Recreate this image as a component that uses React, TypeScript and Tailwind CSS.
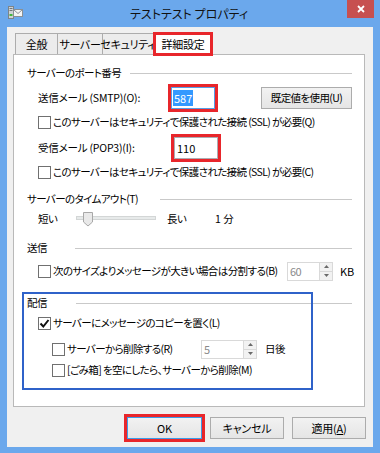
import React from "react";

const Check = ({ checked = false }: { checked?: boolean }) => (
  <span className="w-[13px] h-[13px] border border-[#707070] bg-white flex items-center justify-center shrink-0">
    {checked && (
      <svg width="11" height="11" viewBox="0 0 11 11">
        <path d="M1.5 5.5 L4.3 8.5 L9.5 2" stroke="#111" strokeWidth="2" fill="none" />
      </svg>
    )}
  </span>
);

const Arrow = ({ up }: { up?: boolean }) => (
  <svg width="5" height="3" viewBox="0 0 5 3">
    {up ? <path d="M0 3 L2.5 0 L5 3 Z" fill="#6a6a6a" /> : <path d="M0 0 L2.5 3 L5 0 Z" fill="#6a6a6a" />}
  </svg>
);

const Spin = ({ value, className }: { value: string; className: string }) => (
  <div className={"flex h-[19px] border border-[#d9d9d9] bg-white shrink-0 " + className}>
    <div className="flex-1 pl-[2px] text-[#8a8a8a] leading-[17px] text-[11px]">{value}</div>
    <div className="w-[13px] flex flex-col border-l border-[#d9d9d9]">
      <div className="flex-1 bg-[#f2f2f2] border-b border-[#d9d9d9] flex items-center justify-center">
        <Arrow up />
      </div>
      <div className="flex-1 bg-[#f2f2f2] flex items-center justify-center">
        <Arrow />
      </div>
    </div>
  </div>
);

const GroupHeader = ({ label, w }: { label: string; w: string }) => (
  <div className="h-[16px] flex items-center">
    <span className={"whitespace-nowrap shrink-0 " + w}>{label}</span>
    <div className="flex-1 h-px bg-[#c9c9c9]" />
  </div>
);

const Btn = ({ children, className }: { children: React.ReactNode; className: string }) => (
  <div
    className={
      "h-[22px] border bg-linear-to-b from-[#f2f2f2] to-[#e5e5e5] flex items-center justify-center whitespace-nowrap shrink-0 " +
      className
    }
  >
    {children}
  </div>
);

export default function App() {
  return (
    <div className="w-[380px] h-[453px] bg-[#6ba8ec] flex flex-col overflow-hidden text-[10.5px] tracking-[-0.6px] text-black font-['Noto_Sans_CJK_JP',sans-serif] [font-feature-settings:'palt']">
      {/* title bar */}
      <div className="h-[27px] flex items-start pl-[8px] pr-[6px]">
        <div className="w-[15px] h-[25px] flex items-center">
          <svg width="15" height="13" viewBox="0 0 15 13">
            <rect x="0.5" y="0.5" width="5" height="12" fill="#cfd3d6" stroke="#7d8489" />
            <rect x="1.5" y="2" width="3" height="1" fill="#6f767b" />
            <rect x="1.5" y="4" width="3" height="1" fill="#6f767b" />
            <rect x="1.5" y="8" width="3" height="2" fill="#41b53b" />
            <rect x="5.5" y="3.5" width="9" height="7" fill="#f4f4f4" stroke="#8a9095" />
            <path d="M5.5 3.5 L10 7.5 L14.5 3.5" stroke="#8a9095" fill="none" />
          </svg>
        </div>
        <div className="flex-1 h-[27px] flex items-center justify-center pl-[8px] text-[12px] tracking-[0px] text-[#111]">
          テストテスト プロパティ
        </div>
        <div className="w-[27px] h-[18px] bg-[#c75050] flex items-center justify-center">
          <svg width="8" height="8" viewBox="0 0 8 8">
            <path d="M1 1 L7 7 M7 1 L1 7" stroke="#fff" strokeWidth="1.8" />
          </svg>
        </div>
      </div>

      {/* body */}
      <div className="mx-[7px] h-[420px] bg-[#f0f0f0] flex flex-col px-[6px] pt-[5px]">
        {/* tabs */}
        <div className="flex items-end h-[22px] ml-[2px] text-[11px] tracking-[-0.3px]">
          <div className="w-[42px] h-[21px] border-l border-t border-[#acacac] bg-[#ececec] flex items-center justify-center whitespace-nowrap">
            全般
          </div>
          <div className="w-[45px] h-[21px] border-l border-t border-[#acacac] bg-[#ececec] flex items-center justify-center whitespace-nowrap">
            サーバー
          </div>
          <div className="w-[51px] h-[21px] border-l border-t border-[#acacac] bg-[#ececec] flex items-center justify-center whitespace-nowrap">
            セキュリティ
          </div>
          <div className="w-[60px] h-[24px] border-[3px] border-[#e8262b] bg-white flex items-center justify-center mb-[-2px] relative z-10 whitespace-nowrap">
            詳細設定
          </div>
        </div>

        {/* panel */}
        <div className="w-[352px] h-[353px] border border-[#b9b9b9] bg-white relative pl-[13px] pr-[12px] pt-[10px] flex flex-col">
          <GroupHeader label="サーバーのポート番号" w="w-[103px]" />

          <div className="mt-[5px] h-[24px] flex items-center pl-[11px]">
            <span className="w-[136px] whitespace-nowrap tracking-[-0.2px]">送信メール (SMTP)(O):</span>
            <div className="w-[44px] h-[22px] border border-[#569de5] bg-white outline-3 outline-solid outline-[#e8262b] flex items-center pl-[1px] shrink-0 text-[11px] tracking-[0px]">
              <span className="bg-[#3399ff] text-white px-[1px] leading-[16px]">587</span>
            </div>
            <Btn className="ml-[46px] w-[91px] border-[#acacac]">既定値を使用(U)</Btn>
          </div>

          <div className="h-[24px] flex items-center pl-[11px] gap-[2px]">
            <Check />
            <span className="whitespace-nowrap">このサーバーはセキュリティで保護された接続 (SSL) が必要(Q)</span>
          </div>

          <div className="mt-[2px] h-[24px] flex items-center pl-[11px]">
            <span className="w-[136px] whitespace-nowrap tracking-[-0.2px]">受信メール (POP3)(I):</span>
            <div className="w-[44px] h-[22px] border border-[#abadb3] bg-white outline-3 outline-solid outline-[#e8262b] flex items-center pl-[2px] shrink-0 text-[11px] tracking-[0px]">
              110
            </div>
          </div>

          <div className="h-[24px] flex items-center pl-[11px] gap-[2px]">
            <Check />
            <span className="whitespace-nowrap">このサーバーはセキュリティで保護された接続 (SSL) が必要(C)</span>
          </div>

          <div className="mt-[7px]">
            <GroupHeader label="サーバーのタイムアウト(T)" w="w-[133px]" />
          </div>

          <div className="h-[24px] flex items-center pl-[11px]">
            <span className="w-[38px]">短い</span>
            <svg width="80" height="16" viewBox="0 0 80 16">
              <rect x="0.5" y="5.5" width="79" height="3" fill="#e7eaea" stroke="#d3d6d6" />
              <path d="M7.5 1.5 H16.5 V11 L12 15 L7.5 11 Z" fill="#e9e9e9" stroke="#a8a8a8" />
            </svg>
            <span className="ml-[11px] w-[48px]">長い</span>
            <span className="tracking-[0px]">1 分</span>
          </div>

          <div className="mt-[9px]">
            <GroupHeader label="送信" w="w-[48px]" />
          </div>

          <div className="mt-[3px] h-[24px] flex items-center pl-[11px]">
            <div className="w-[249px] flex items-center gap-[2px] shrink-0">
              <Check />
              <span className="whitespace-nowrap">次のサイズよりメッセージが大きい場合は分割する(B)</span>
            </div>
            <Spin value="60" className="w-[46px]" />
            <span className="ml-[7px] text-[11px] tracking-[0px]">KB</span>
          </div>

          <div className="mt-[12px]">
            <GroupHeader label="配信" w="w-[49px]" />
          </div>

          <div className="h-[24px] flex items-center pl-[11px] gap-[2px]">
            <Check checked />
            <span className="whitespace-nowrap">サーバーにメッセージのコピーを置く(L)</span>
          </div>

          <div className="mt-[2px] h-[24px] flex items-center pl-[25px]">
            <div className="w-[149px] flex items-center gap-[2px] shrink-0">
              <Check />
              <span className="whitespace-nowrap">サーバーから削除する(R)</span>
            </div>
            <Spin value="5" className="w-[56px]" />
            <span className="ml-[8px]">日後</span>
          </div>

          <div className="h-[18px] flex items-center pl-[25px] gap-[2px]">
            <Check />
            <span className="whitespace-nowrap">[ごみ箱] を空にしたら、サーバーから削除(M)</span>
          </div>

          {/* blue annotation box */}
          <div className="absolute left-[8px] top-[237px] w-[291px] h-[98px] border-2 border-[#2f62c9] pointer-events-none" />
        </div>

        {/* buttons */}
        <div className="flex justify-end gap-[8px] mt-[10px] pr-[1px] text-[11px] tracking-[-0.2px]">
          <Btn className="w-[75px] border-[#3c9be8] outline-3 outline-solid outline-[#e8262b]">OK</Btn>
          <Btn className="w-[74px] border-[#acacac]">キャンセル</Btn>
          <Btn className="w-[74px] border-[#acacac]">
            適用(<span className="underline">A</span>)
          </Btn>
        </div>
      </div>
    </div>
  );
}
